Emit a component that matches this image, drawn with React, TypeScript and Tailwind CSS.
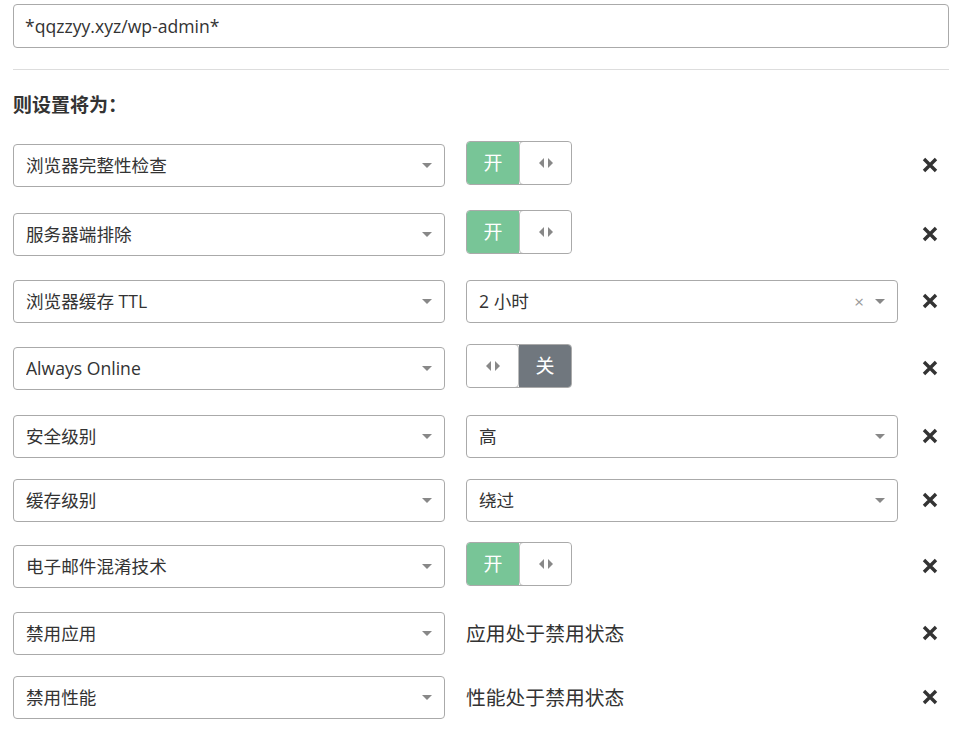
import React from "react";

type Value =
  | { kind: "toggle"; on: boolean }
  | { kind: "select"; label: string; clearable?: boolean }
  | { kind: "text"; label: string };

interface Rule {
  setting: string;
  value: Value;
  gap: string;
}

const rules: Rule[] = [
  { setting: "浏览器完整性检查", value: { kind: "toggle", on: true }, gap: "mt-[27px]" },
  { setting: "服务器端排除", value: { kind: "toggle", on: true }, gap: "mt-[26px]" },
  { setting: "浏览器缓存 TTL", value: { kind: "select", label: "2 小时", clearable: true }, gap: "mt-[24px]" },
  { setting: "Always Online", value: { kind: "toggle", on: false }, gap: "mt-[24px]" },
  { setting: "安全级别", value: { kind: "select", label: "高" }, gap: "mt-[25px]" },
  { setting: "缓存级别", value: { kind: "select", label: "绕过" }, gap: "mt-[21px]" },
  { setting: "电子邮件混淆技术", value: { kind: "toggle", on: true }, gap: "mt-[23px]" },
  { setting: "禁用应用", value: { kind: "text", label: "应用处于禁用状态" }, gap: "mt-[24px]" },
  { setting: "禁用性能", value: { kind: "text", label: "性能处于禁用状态" }, gap: "mt-[21px]" },
];

function Caret() {
  return (
    <svg width="10" height="5" viewBox="0 0 10 5" className="shrink-0">
      <path d="M0 0h10L5 5z" fill="#888" />
    </svg>
  );
}

function Select({ label, clearable }: { label: string; clearable?: boolean }) {
  return (
    <div className="flex h-[43px] w-[432px] shrink-0 items-center rounded-[4px] border border-[#aaa] bg-white pl-[12px] pr-[12px]">
      <span className="flex-1 truncate">{label}</span>
      {clearable && <span className="mr-[11px] text-[17px] leading-none text-[#999]">×</span>}
      <Caret />
    </div>
  );
}

function Handle() {
  return (
    <div className="flex h-full w-[53px] items-center justify-center rounded-[4px] border border-[#bbb] bg-white">
      <svg width="14" height="10" viewBox="0 0 14 10">
        <path d="M5 0v10L0 5z" fill="#888" />
        <path d="M9 0v10l5-5z" fill="#888" />
      </svg>
    </div>
  );
}

function Toggle({ on }: { on: boolean }) {
  return (
    <div className="-mt-[3px] flex h-[44px] w-[106px] overflow-hidden rounded-[4px] border border-[#aaa] text-[19px]">
      {on ? (
        <>
          <div className="flex w-[53px] items-center justify-center bg-[#78c597] text-white">开</div>
          <div className="-my-px -mr-px flex-1">
            <Handle />
          </div>
        </>
      ) : (
        <>
          <div className="-my-px -ml-px">
            <Handle />
          </div>
          <div className="flex flex-1 items-center justify-center bg-[#70777e] text-white">关</div>
        </>
      )}
    </div>
  );
}

function Remove() {
  return (
    <svg width="16" height="16" viewBox="0 0 16 16" className="ml-[24px] mt-[13px] shrink-0">
      <path d="M2 2l12 12M14 2L2 14" stroke="#333" strokeWidth="3.4" />
    </svg>
  );
}

export default function App() {
  return (
    <div className="min-h-[732px] bg-white px-[13px] pt-[4px] text-[17.6px] text-[#333] [font-family:'Open_Sans','Noto_Sans_CJK_SC',sans-serif]">
      <div className="flex h-[44px] w-[936px] items-center rounded-[4px] border border-[#aaa] px-[11px]">
        *qqzzyy.xyz/wp-admin*
      </div>
      <div className="mt-[21px] h-px w-[936px] bg-[#ddd]" />
      <h2 className="mt-[23px] text-[19px] font-bold leading-[24px] text-[#333]">则设置将为：</h2>
      {rules.map((rule) => (
        <div key={rule.setting} className={`flex items-start ${rule.gap}`}>
          <Select label={rule.setting} />
          <div className="ml-[21px] flex w-[432px] shrink-0">
            {rule.value.kind === "toggle" && <Toggle on={rule.value.on} />}
            {rule.value.kind === "select" && (
              <Select label={rule.value.label} clearable={rule.value.clearable} />
            )}
            {rule.value.kind === "text" && (
              <div className="flex h-[43px] items-center text-[19.8px]">{rule.value.label}</div>
            )}
          </div>
          <Remove />
        </div>
      ))}
    </div>
  );
}
